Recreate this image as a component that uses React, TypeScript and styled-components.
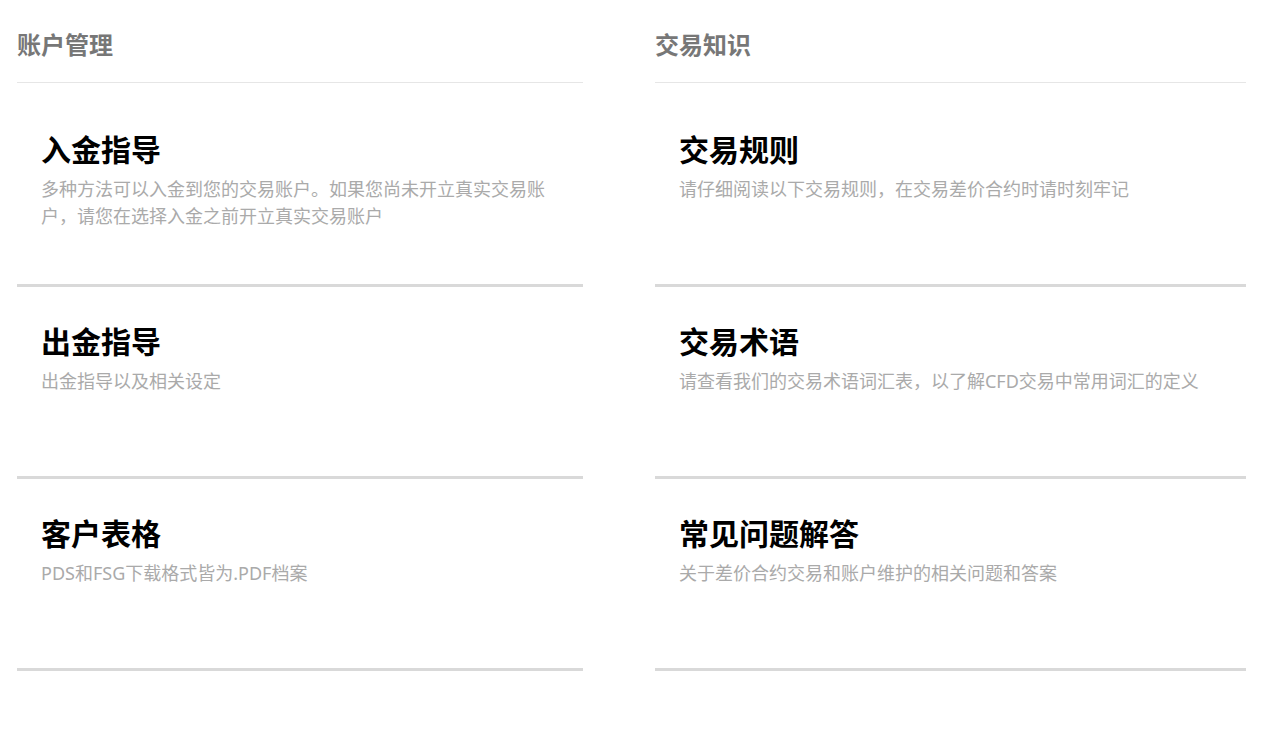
import styled, { createGlobalStyle } from "styled-components";

const sections = [
  {
    title: "账户管理",
    width: "566px",
    items: [
      {
        name: "入金指导",
        desc: "多种方法可以入金到您的交易账户。如果您尚未开立真实交易账户，请您在选择入金之前开立真实交易账户",
      },
      { name: "出金指导", desc: "出金指导以及相关设定" },
      { name: "客户表格", desc: "PDS和FSG下载格式皆为.PDF档案" },
    ],
  },
  {
    title: "交易知识",
    width: "591px",
    items: [
      {
        name: "交易规则",
        desc: "请仔细阅读以下交易规则，在交易差价合约时请时刻牢记",
      },
      {
        name: "交易术语",
        desc: "请查看我们的交易术语词汇表，以了解CFD交易中常用词汇的定义",
      },
      { name: "常见问题解答", desc: "关于差价合约交易和账户维护的相关问题和答案" },
    ],
  },
];

function App() {
  return (
    <>
      <GlobalStyle />
      <Page>
        {sections.map((section) => (
          <Column key={section.title} $width={section.width}>
            <SectionHeader>{section.title}</SectionHeader>
            <CardList>
              {section.items.map((item) => (
                <Card key={item.name}>
                  <CardTitle>{item.name}</CardTitle>
                  <CardDesc>{item.desc}</CardDesc>
                </Card>
              ))}
            </CardList>
          </Column>
        ))}
      </Page>
    </>
  );
}

const GlobalStyle = createGlobalStyle`
  * {
    box-sizing: border-box;
  }
  body {
    margin: 0;
    background: #fff;
    font-family: "Noto Sans", "Noto Sans CJK SC", sans-serif;
  }
`;

const Page = styled.div`
  display: flex;
  gap: 72px;
  padding-left: 17px;
`;

const Column = styled.section<{ $width: string }>`
  width: ${({ $width }) => $width};
`;

const SectionHeader = styled.h2`
  margin: 0;
  padding: 28px 0 20px;
  height: 83px;
  font-size: 24px;
  line-height: 34px;
  font-weight: 700;
  color: #777;
  border-bottom: 1px solid #e6e6e6;
`;

const CardList = styled.ul`
  list-style: none;
  margin: 0;
  padding: 12px 0 0;
`;

const Card = styled.li`
  height: 192px;
  padding: 32px 30px 0 24px;
  border-bottom: 3px solid #d9d9d9;
`;

const CardTitle = styled.h3`
  margin: 0 0 4px;
  font-size: 30px;
  line-height: 45px;
  font-weight: 700;
  color: #000;
`;

const CardDesc = styled.p`
  margin: 0;
  font-size: 18px;
  line-height: 27px;
  color: #aaa;
`;

export default App;
